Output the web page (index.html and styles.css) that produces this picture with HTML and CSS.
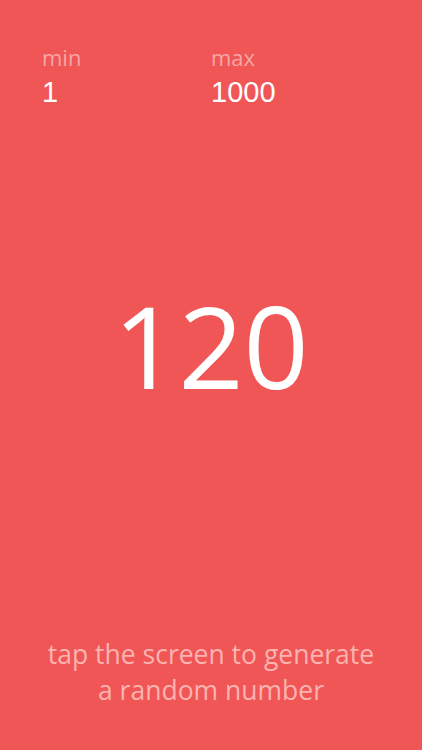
FILE: index.html
```html
<!DOCTYPE html>
<html>
<head>
<meta charset="utf-8">
<link rel="stylesheet" href="styles.css">
</head>
<body>
<div class="screen">
  <div class="range">
    <div class="field">
      <div class="label">min</div>
      <div class="value">1</div>
    </div>
    <div class="field">
      <div class="label">max</div>
      <div class="value">1000</div>
    </div>
  </div>
  <div class="result">120</div>
  <div class="hint">tap the screen to generate<br>a random number</div>
</div>
</body>
</html>
```
FILE: styles.css
```css
html, body {
  margin: 0;
  padding: 0;
  background: #f05656;
}
.screen {
  width: 422px;
  height: 750px;
  display: flex;
  flex-direction: column;
  box-sizing: border-box;
  background: #f05656;
  font-family: "Open Sans", "Liberation Sans", sans-serif;
}
.range {
  display: flex;
  padding: 43px 0 0 42px;
}
.field {
  width: 169px;
}
.label {
  font-size: 22px;
  line-height: 28px;
  color: #f7a5a5;
  font-weight: 400;
}
.value {
  font-family: "Liberation Sans", Arial, sans-serif;
  font-size: 29px;
  line-height: 32px;
  color: #ffffff;
  margin-top: 5px;
}
.result {
  margin-top: 167px;
  text-align: center;
  font-size: 114px;
  line-height: 140px;
  color: #ffffff;
  font-weight: 400;
}
.hint {
  margin-top: auto;
  margin-bottom: 42px;
  text-align: center;
  font-size: 26.5px;
  line-height: 36px;
  color: #fbb3b1;
  font-weight: 400;
}
```
